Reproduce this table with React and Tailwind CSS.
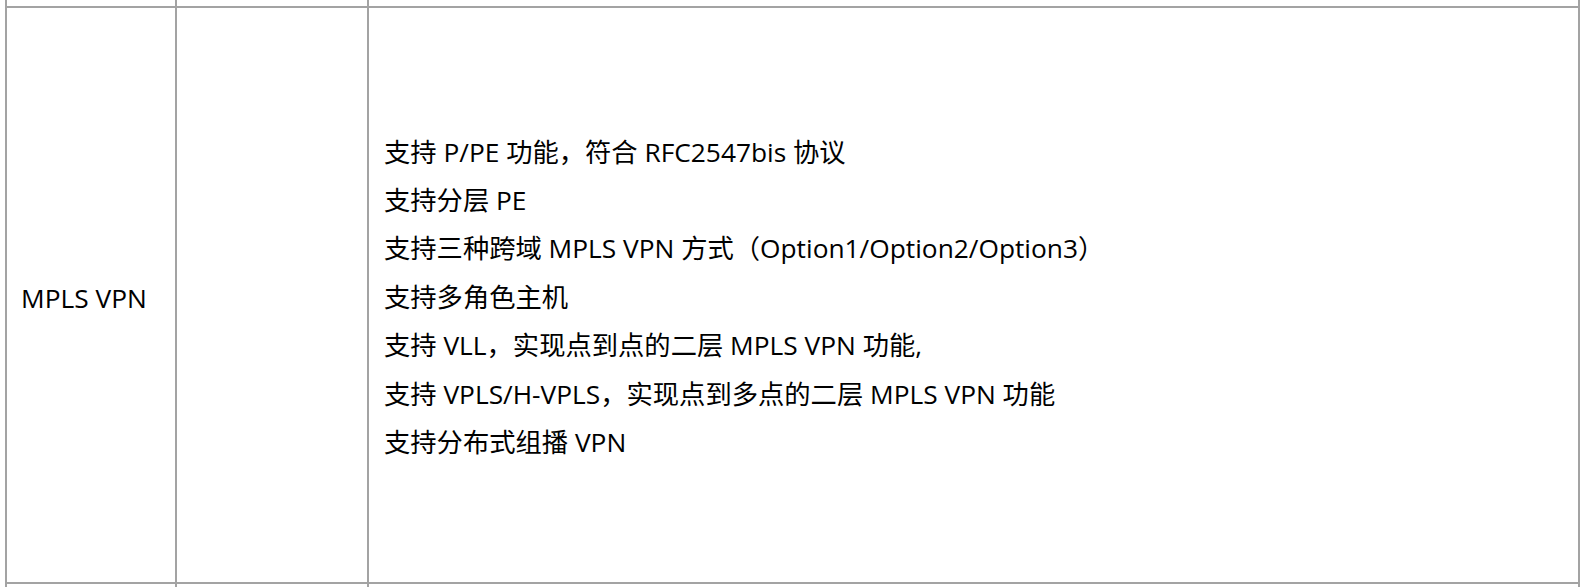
import React from "react";

const items = [
  "支持 P/PE 功能，符合 RFC2547bis 协议",
  "支持分层 PE",
  "支持三种跨域 MPLS VPN 方式（Option1/Option2/Option3）",
  "支持多角色主机",
  "支持 VLL，实现点到点的二层 MPLS VPN 功能,",
  "支持 VPLS/H-VPLS，实现点到多点的二层 MPLS VPN 功能",
  "支持分布式组播 VPN",
];

const cell = "border-2 border-[#a3a3a3] p-0";

const App = () => {
  return (
    <div
      className="w-[1585px] h-[587px] overflow-hidden bg-white pl-[5px]"
      style={{ fontFamily: '"Open Sans", "Noto Sans CJK SC", sans-serif' }}
    >
      <table className="border-collapse -mt-[2px] w-[1575px] table-fixed text-[26.3px] text-black">
        <colgroup>
          <col className="w-[170px]" />
          <col className="w-[192px]" />
          <col />
        </colgroup>
        <tbody>
          <tr className="h-[9px]">
            <td className={`${cell} border-t-0`}></td>
            <td className={`${cell} border-t-0`}></td>
            <td className={`${cell} border-t-0`}></td>
          </tr>
          <tr className="h-[576px]">
            <td className={`${cell} pl-[14px] pt-[8px] align-middle`}>MPLS VPN</td>
            <td className={cell}></td>
            <td className={`${cell} pl-[15px] pt-[4px] align-middle`}>
              <div className="flex flex-col">
                {items.map((t) => (
                  <p key={t} className="leading-[48.4px]">
                    {t}
                  </p>
                ))}
              </div>
            </td>
          </tr>
          <tr className="h-[20px]">
            <td className={cell}></td>
            <td className={cell}></td>
            <td className={cell}></td>
          </tr>
        </tbody>
      </table>
    </div>
  );
};

export default App;
